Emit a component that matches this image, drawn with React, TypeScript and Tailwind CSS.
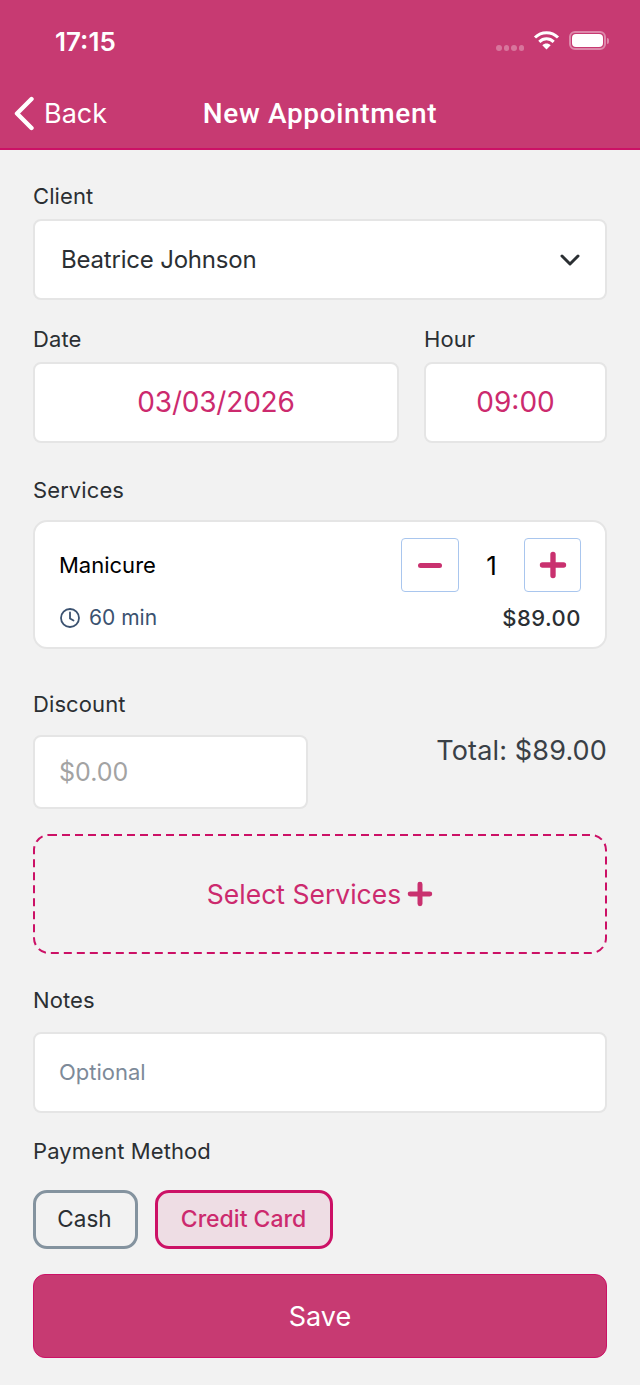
import React from "react";

function Label({ children }: { children: React.ReactNode }) {
  return <div className="text-[22px] leading-[26px] text-[#2b2f33] tracking-[0.1px]">{children}</div>;
}

function PlusIcon({ className }: { className?: string }) {
  return (
    <svg viewBox="0 0 24 24" className={className}>
      <path d="M12 3v18M3 12h18" stroke="#c9316f" strokeWidth="4.6" strokeLinecap="round" fill="none" />
    </svg>
  );
}

function StatusIcons() {
  return (
    <div className="flex items-center">
      <div className="flex gap-[2px] mt-[14px] mr-[9px]">
        <span className="w-[5.5px] h-[5.5px] rounded-full bg-white/30" />
        <span className="w-[5.5px] h-[5.5px] rounded-full bg-white/30" />
        <span className="w-[5.5px] h-[5.5px] rounded-full bg-white/30" />
        <span className="w-[5.5px] h-[5.5px] rounded-full bg-white/30" />
      </div>
      <svg width="27" height="20" viewBox="0 0 26 20" className="mr-[9px] -mt-[2px]">
        <path d="M1.5 7.5C8 1 18 1 24.5 7.5" stroke="#fff" strokeWidth="3" fill="none" />
        <path d="M5.8 11.8C10 7.8 16 7.8 20.2 11.8" stroke="#fff" strokeWidth="3" fill="none" />
        <path d="M13 19.5L8.8 15.2C11 13 15 13 17.2 15.2Z" fill="#fff" />
      </svg>
      <div className="w-[37px] h-[19px] -mt-[1px] rounded-[6px] border-2 border-white/40 p-[1px]">
        <div className="w-full h-full rounded-[4px] bg-white" />
      </div>
      <span className="w-[2px] h-[6px] -mt-[1px] rounded-r-sm bg-white/40 ml-[1px]" />
    </div>
  );
}

export default function App() {
  return (
    <div className="w-[640px] h-[1385px] bg-[#f2f2f2] font-['Inter',sans-serif] overflow-hidden">
      <header className="h-[150px] bg-[#c73a72] border-b-2 border-b-[#cc1166] text-white relative">
        <div className="h-[82px] pl-[55px] pr-[31px] flex items-center justify-between">
          <span className="text-[26px] font-semibold">17:15</span>
          <StatusIcons />
        </div>
        <div className="h-[66px] flex items-center justify-center relative -mt-[1px]">
          <div className="absolute left-[12px] top-[15px] flex items-center">
            <svg width="24" height="36" viewBox="0 0 24 36">
              <path d="M19.5 3L5 17.5L19.5 32" stroke="#fff" strokeWidth="4.4" strokeLinecap="round" strokeLinejoin="round" fill="none" />
            </svg>
            <span className="ml-[8px] text-[27px] leading-[36px]">Back</span>
          </div>
          <span className="text-[28px] font-medium font-['Roboto',sans-serif] tracking-[0.65px]">New Appointment</span>
        </div>
      </header>

      <main className="px-[33px] pt-[33px]">
        <Label>Client</Label>
        <div className="mt-[10px] h-[81px] bg-white border-2 border-[#e5e5e5] rounded-[8px] flex items-center justify-between pl-[26px] pr-[24px]">
          <span className="text-[24px] text-[#2b2f33] tracking-[-0.2px]">Beatrice Johnson</span>
          <svg width="22" height="14" viewBox="0 0 22 14">
            <path d="M3 3l8 8 8-8" stroke="#2b2f33" strokeWidth="3" strokeLinecap="round" strokeLinejoin="round" fill="none" />
          </svg>
        </div>

        <div className="mt-[26px] flex gap-[25px]">
          <div className="w-[366px]">
            <Label>Date</Label>
            <div className="mt-[10px] h-[81px] pb-[2px] bg-white border-2 border-[#e5e5e5] rounded-[8px] flex items-center justify-center text-[28px] tracking-[-0.2px] text-[#cc2a6e]">
              03/03/2026
            </div>
          </div>
          <div className="w-[183px]">
            <Label>Hour</Label>
            <div className="mt-[10px] h-[81px] pb-[2px] bg-white border-2 border-[#e5e5e5] rounded-[8px] flex items-center justify-center text-[28px] text-[#cc2a6e]">
              09:00
            </div>
          </div>
        </div>

        <div className="mt-[34px]">
          <Label>Services</Label>
        </div>
        <div className="mt-[17px] h-[129px] bg-white border-2 border-[#e5e5e5] rounded-[14px] pl-[24px] pr-[24px] pt-[16px]">
          <div className="flex items-center justify-between h-[54px]">
            <span className="text-[22px] text-black">Manicure</span>
            <div className="flex items-center">
              <div className="w-[58px] h-[54px] border border-[#a9c6ee] rounded-[4px] flex items-center justify-center">
                <div className="w-[24px] h-[5px] rounded-full bg-[#c9316f]" />
              </div>
              <span className="w-[65px] text-center text-[26px] text-black">1</span>
              <div className="w-[57px] h-[54px] border border-[#a9c6ee] rounded-[4px] flex items-center justify-center">
                <PlusIcon className="w-[28px] h-[28px]" />
              </div>
            </div>
          </div>
          <div className="flex items-center justify-between mt-[13px]">
            <div className="flex items-center gap-[8px] text-[#3b5270]">
              <svg width="22" height="22" viewBox="0 0 22 22">
                <circle cx="11" cy="11" r="9" stroke="#3b5270" strokeWidth="1.8" fill="none" />
                <path d="M11 5.5V11.5L14.5 13.5" stroke="#3b5270" strokeWidth="1.8" fill="none" strokeLinecap="round" />
              </svg>
              <span className="text-[21px] leading-[26px]">60 min</span>
            </div>
            <span className="text-[22px] leading-[26px] font-medium text-[#2b2f33] tracking-[0.5px]">$89.00</span>
          </div>
        </div>

        <div className="mt-[42px]">
          <Label>Discount</Label>
        </div>
        <div className="flex justify-between items-start mt-[18px]">
          <div className="w-[275px] h-[74px] pt-[2px] bg-white border-2 border-[#e5e5e5] rounded-[8px] flex items-center pl-[24px] text-[25px] text-[#a3a3a3]">
            $0.00
          </div>
          <span className="text-[27px] leading-[32px] text-[#3a4046] tracking-[0.15px]">Total: $89.00</span>
        </div>

        <div className="mt-[25px] h-[120px] rounded-[16px] flex items-center justify-center gap-[6px] relative">
          <svg className="absolute inset-0 w-full h-full" fill="none">
            <rect x="1" y="1" width="572" height="118" rx="15" stroke="#cc1166" strokeWidth="2" strokeDasharray="8 5" />
          </svg>
          <span className="text-[26.5px] text-[#cc2a6e] pt-[1px]">Select Services</span>
          <PlusIcon className="w-[26px] h-[26px]" />
        </div>

        <div className="mt-[33px]">
          <Label>Notes</Label>
        </div>
        <div className="mt-[19px] h-[81px] bg-white border-2 border-[#e5e5e5] rounded-[8px] flex items-center pl-[24px] text-[22px] text-[#7d8a99]">
          Optional
        </div>

        <div className="mt-[25px]">
          <Label>Payment Method</Label>
        </div>
        <div className="mt-[26px] flex gap-[17px]">
          <div className="w-[105px] h-[59px] pr-[2px] pb-[1px] border-[3px] border-[#84939f] rounded-[14px] flex items-center justify-center text-[22.5px] text-[#2b2f33]">
            Cash
          </div>
          <div className="w-[178px] h-[59px] pr-[1px] border-[3px] border-[#cc1166] bg-[#eedde4] rounded-[14px] flex items-center justify-center text-[23px] font-medium text-[#cc2a6e]">
            Credit Card
          </div>
        </div>

        <div className="mt-[25px] h-[84px] bg-[#c73a72] border border-[#cc1166] rounded-[12px] flex items-center justify-center text-[27px] text-white pt-[3px]">
          Save
        </div>
      </main>
    </div>
  );
}
